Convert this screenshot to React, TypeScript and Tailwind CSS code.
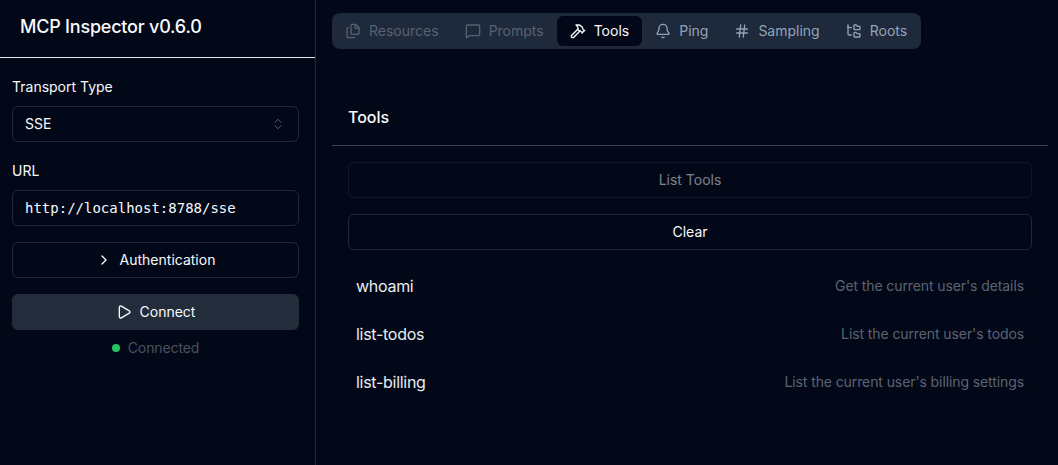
import { Bell, ChevronRight, ChevronsUpDown, Files, FolderTree, Hammer, Hash, MessageSquare, Play } from "lucide-react";

const tabs = [
  { label: "Resources", icon: Files, disabled: true },
  { label: "Prompts", icon: MessageSquare, disabled: true },
  { label: "Tools", icon: Hammer, active: true },
  { label: "Ping", icon: Bell },
  { label: "Sampling", icon: Hash },
  { label: "Roots", icon: FolderTree },
];

const tools = [
  { name: "whoami", description: "Get the current user's details" },
  { name: "list-todos", description: "List the current user's todos" },
  { name: "list-billing", description: "List the current user's billing settings" },
];

export default function App() {
  return (
    <div className="flex h-screen overflow-hidden bg-[#020817] font-['Inter',sans-serif] text-[#f8fafc]">
      <aside className="flex w-[316px] shrink-0 flex-col border-r border-[#1e293b]">
        <div className="flex h-[58px] items-center border-b border-[#e5e7eb] pb-[3px] pl-5">
          <h1 className="text-lg font-medium tracking-[-0.012em]">MCP Inspector v0.6.0</h1>
        </div>
        <div className="flex flex-col pt-[19px] pr-4 pl-3">
          <label className="h-5 text-sm leading-5">Transport Type</label>
          <div className="mt-[9px] flex h-9 items-center justify-between rounded-md border border-[#1e293b] pr-[13px] pl-3 text-sm">
            SSE
            <ChevronsUpDown className="h-[14px] w-[14px] text-[#64748b]" strokeWidth={1.5} />
          </div>
          <label className="mt-[19px] h-5 text-sm leading-5">URL</label>
          <div className="mt-[9px] flex h-9 items-center rounded-md border border-[#1e293b] pl-3 font-['DejaVu_Sans_Mono',monospace] text-sm">
            http://localhost:8788/sse
          </div>
          <button className="mt-4 flex h-9 items-center justify-center rounded-md border border-[#1e293b] text-sm">
            <ChevronRight className="mr-2 h-4 w-4" />
            Authentication
          </button>
          <button className="mt-4 flex h-9 items-center justify-center rounded-md bg-[#232c3a] text-sm">
            <Play className="mr-2 h-4 w-4" strokeWidth={2} />
            Connect
          </button>
          <div className="mt-2 flex h-5 items-center justify-center gap-2 text-sm tracking-[-0.008em] text-[#4a5160]">
            <span className="h-2 w-2 rounded-full bg-[#22c55e]" />
            Connected
          </div>
        </div>
      </aside>

      <main className="flex flex-1 flex-col pt-[13px] pr-[10px] pl-4">
        <div className="flex h-9 w-fit items-center rounded-lg bg-[#1e293b] pr-px">
          {tabs.map((tab) => (
            <div
              key={tab.label}
              className={
                tab.active
                  ? "flex h-[30px] items-center rounded-md bg-[#020817] px-[13px] text-sm text-[#f8fafc]"
                  : tab.disabled
                    ? "flex h-[30px] items-center rounded-md px-[13px] text-sm text-[#566273]"
                    : "flex h-[30px] items-center rounded-md px-[13px] text-sm text-[#94a3b8]"
              }
            >
              <tab.icon className="mr-2 h-4 w-4" strokeWidth={2} />
              {tab.label}
            </div>
          ))}
        </div>

        <div className="mt-[32px] flex h-[65px] items-center border-b border-[#3a4150] pt-2 pl-4">
          <h2 className="text-base font-medium">Tools</h2>
        </div>

        <div className="flex flex-col px-4 pt-4">
          <button className="h-9 rounded-md border border-[#1e293b]/50 text-sm text-[#f8fafc]/50">List Tools</button>
          <button className="mt-4 h-9 rounded-md border border-[#1e293b] text-sm">Clear</button>
          <div className="mt-3 flex flex-col">
            {tools.map((tool) => (
              <div key={tool.name} className="flex h-12 items-center justify-between px-2">
                <span className="text-base tracking-[-0.018em] text-[#e8ecf2]">{tool.name}</span>
                <span className="text-sm tracking-[-0.007em] text-[#5c6473]">{tool.description}</span>
              </div>
            ))}
          </div>
        </div>
      </main>
    </div>
  );
}
